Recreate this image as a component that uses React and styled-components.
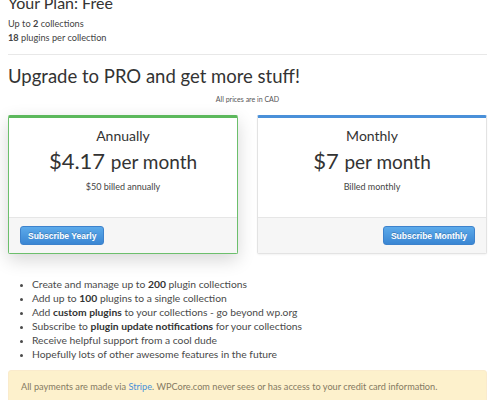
import React from "react";
import styled, { createGlobalStyle } from "styled-components";

const Global = createGlobalStyle`
  html, body { margin: 0; padding: 0; background: #fff; }
  body { font-family: "Lato", "Open Sans", sans-serif; color: #333; }
  * { box-sizing: border-box; }
`;

const Page = styled.div`
  padding: 0 8px;
  margin-top: -7px;
`;

const PlanTitle = styled.h2`
  margin: 0;
  font-size: 16px;
  font-weight: 400;
  line-height: 20px;
  color: #333;
`;

const PlanLine = styled.div`
  font-size: 9.2px;
  line-height: 14px;
  color: #444;
  b { font-weight: 700; }
`;

const PlanInfo = styled.div`
  padding-top: 4px;
`;

const Rule = styled.hr`
  border: 0;
  border-top: 1px solid #e8e8e8;
  margin: 9px 0 0;
`;

const Heading = styled.h1`
  margin: 8px 0 0;
  font-size: 18.5px;
  font-weight: 400;
  line-height: 26px;
  color: #333;
`;

const Note = styled.div`
  text-align: center;
  font-size: 7px;
  line-height: 10px;
  color: #555;
  margin-top: 5px;
`;

const Cards = styled.div`
  display: grid;
  grid-template-columns: 1fr 1fr;
  gap: 19px;
  margin-top: 11px;
`;

const Card = styled.div`
  border: 1px solid ${(p) => (p.$featured ? "#6cbf6c" : "#e3e3e3")};
  border-top: 3px solid ${(p) => (p.$featured ? "#5cb85c" : "#4a90d9")};
  border-radius: 2px;
  background: #fff;
  box-shadow: ${(p) =>
    p.$featured ? "0 6px 18px rgba(0,0,0,0.16)" : "0 1px 2px rgba(0,0,0,0.05)"};
  overflow: hidden;
`;

const CardBody = styled.div`
  display: flex;
  flex-direction: column;
  align-items: center;
  padding: 8px 0 18px;
  height: 99px;
`;

const CardTitle = styled.div`
  font-size: 14px;
  line-height: 20px;
  color: #333;
`;

const Price = styled.div`
  font-size: 22px;
  line-height: 30px;
  color: #333;
  margin-top: 0;
  span { font-size: 19px; }
`;

const Billed = styled.div`
  font-size: 9px;
  line-height: 12px;
  color: #444;
  margin-top: 4px;
`;

const CardFooter = styled.div`
  display: flex;
  justify-content: ${(p) => (p.$end ? "flex-end" : "flex-start")};
  border-top: 1px solid #e6e6e6;
  background: #f6f6f6;
  padding: 8px 11px;
  height: 36px;
`;

const Button = styled.button`
  font-family: "Liberation Sans", Arial, sans-serif;
  font-size: 8.5px;
  font-weight: 700;
  color: #fff;
  text-shadow: 0 -1px 0 rgba(0,0,0,0.2);
  background: linear-gradient(#5caaea, #3a86d3);
  border: 1px solid #3d82cc;
  border-radius: 3px;
  padding: 0 7px;
  height: 19px;
  cursor: pointer;
`;

const Features = styled.ul`
  margin: 23px 0 0;
  padding-left: 24px;
  font-size: 10.3px;
  line-height: 14px;
  color: #4a4a4a;
  li::marker { font-size: 8px; }
  b { font-weight: 700; color: #333; }
`;

const Alert = styled.div`
  margin-top: 9px;
  background: #fdf1cc;
  border: 1px solid #faebcc;
  border-radius: 3px;
  padding: 10px 12px 14px;
  font-size: 9.2px;
  line-height: 12px;
  color: #857a62;
  a { color: #4a90d9; text-decoration: none; }
`;

export default function App() {
  return (
    <>
      <Global />
      <Page>
        <PlanTitle>Your Plan: Free</PlanTitle>
        <PlanInfo>
          <PlanLine>Up to <b>2</b> collections</PlanLine>
          <PlanLine><b>18</b> plugins per collection</PlanLine>
        </PlanInfo>
        <Rule />
        <Heading>Upgrade to PRO and get more stuff!</Heading>
        <Note>All prices are in CAD</Note>
        <Cards>
          <Card $featured>
            <CardBody>
              <CardTitle>Annually</CardTitle>
              <Price>$4.17 <span>per month</span></Price>
              <Billed>$50 billed annually</Billed>
            </CardBody>
            <CardFooter>
              <Button>Subscribe Yearly</Button>
            </CardFooter>
          </Card>
          <Card>
            <CardBody>
              <CardTitle>Monthly</CardTitle>
              <Price>$7 <span>per month</span></Price>
              <Billed>Billed monthly</Billed>
            </CardBody>
            <CardFooter $end>
              <Button>Subscribe Monthly</Button>
            </CardFooter>
          </Card>
        </Cards>
        <Features>
          <li>Create and manage up to <b>200</b> plugin collections</li>
          <li>Add up to <b>100</b> plugins to a single collection</li>
          <li>Add <b>custom plugins</b> to your collections - go beyond wp.org</li>
          <li>Subscribe to <b>plugin update notifications</b> for your collections</li>
          <li>Receive helpful support from a cool dude</li>
          <li>Hopefully lots of other awesome features in the future</li>
        </Features>
        <Alert>
          All payments are made via <a href="#">Stripe</a>. WPCore.com never sees or has access to your credit card information.
        </Alert>
      </Page>
    </>
  );
}
